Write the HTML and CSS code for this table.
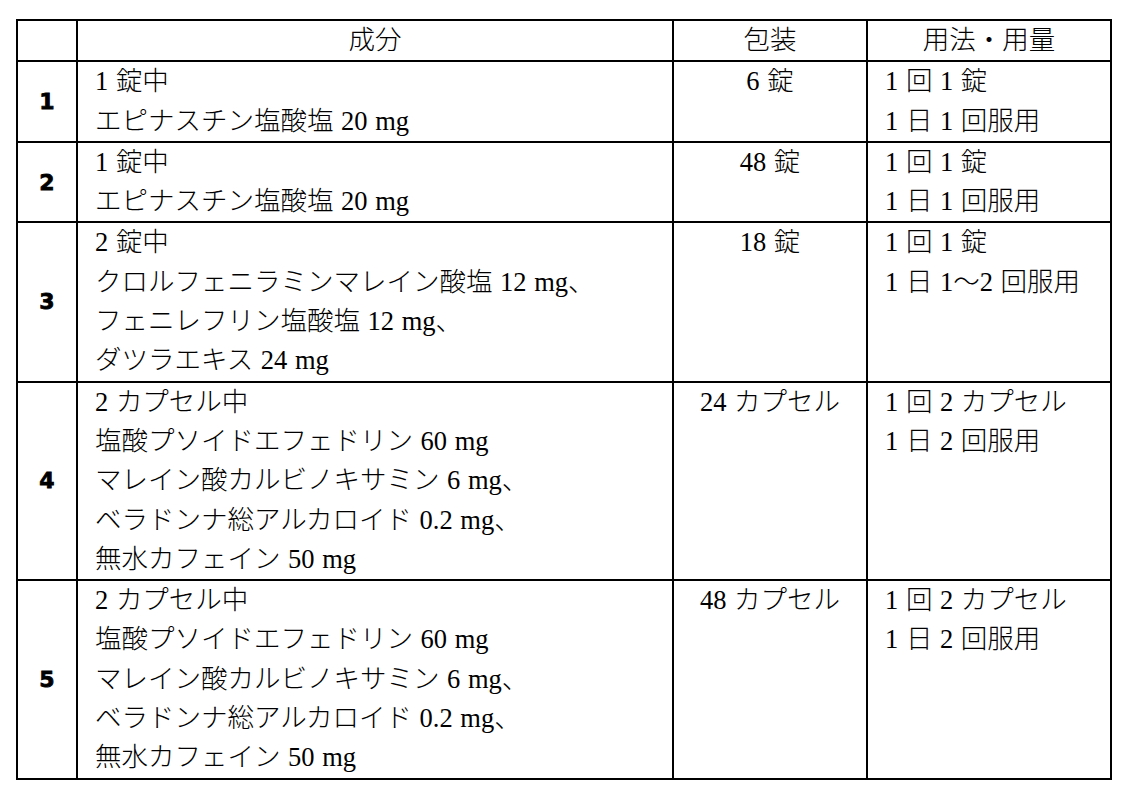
FILE: index.html
```html
<!DOCTYPE html>
<html lang="ja">
<head>
<meta charset="utf-8">
<title>成分・包装・用法</title>
<link rel="stylesheet" href="styles.css">
</head>
<body>
<table class="drug-table">
  <colgroup>
    <col class="c-num">
    <col class="c-ing">
    <col class="c-pack">
    <col class="c-use">
  </colgroup>
  <thead>
    <tr>
      <th class="num"></th>
      <th>成分</th>
      <th>包装</th>
      <th>用法・用量</th>
    </tr>
  </thead>
  <tbody>
    <tr>
      <td class="num">1</td>
      <td>1 錠中<br>エピナスチン塩酸塩 20 mg</td>
      <td class="pack">6 錠</td>
      <td>1 回 1 錠<br>1 日 1 回服用</td>
    </tr>
    <tr>
      <td class="num">2</td>
      <td>1 錠中<br>エピナスチン塩酸塩 20 mg</td>
      <td class="pack">48 錠</td>
      <td>1 回 1 錠<br>1 日 1 回服用</td>
    </tr>
    <tr>
      <td class="num">3</td>
      <td>2 錠中<br>クロルフェニラミンマレイン酸塩 12 mg、<br>フェニレフリン塩酸塩 12 mg、<br>ダツラエキス 24 mg</td>
      <td class="pack">18 錠</td>
      <td>1 回 1 錠<br>1 日 1〜2 回服用</td>
    </tr>
    <tr>
      <td class="num">4</td>
      <td>2 カプセル中<br>塩酸プソイドエフェドリン 60 mg<br>マレイン酸カルビノキサミン 6 mg、<br>ベラドンナ総アルカロイド 0.2 mg、<br>無水カフェイン 50 mg</td>
      <td class="pack">24 カプセル</td>
      <td>1 回 2 カプセル<br>1 日 2 回服用</td>
    </tr>
    <tr>
      <td class="num">5</td>
      <td>2 カプセル中<br>塩酸プソイドエフェドリン 60 mg<br>マレイン酸カルビノキサミン 6 mg、<br>ベラドンナ総アルカロイド 0.2 mg、<br>無水カフェイン 50 mg</td>
      <td class="pack">48 カプセル</td>
      <td>1 回 2 カプセル<br>1 日 2 回服用</td>
    </tr>
  </tbody>
</table>
</body>
</html>
```

FILE: styles.css
```css
html, body {
  margin: 0;
  padding: 0;
  background: #fff;
}

body {
  padding: 19px 0 0 16px;
  color: #000;
  font-family: "Liberation Serif", "Noto Sans CJK JP", serif;
  font-size: 26.5px;
}

.drug-table {
  border-collapse: collapse;
  table-layout: fixed;
  width: 1096px;
  border: 2px solid #000;
}

.c-num { width: 60px; }
.c-ing { width: 596px; }
.c-pack { width: 194px; }
.c-use { width: 244px; }

.drug-table th,
.drug-table td {
  border: 2px solid #000;
  padding: 0 0 0 17px;
  line-height: 39.3px;
  vertical-align: top;
  text-align: left;
  font-weight: 300;
  word-spacing: 1px;
  white-space: nowrap;
}

.drug-table th {
  text-align: center;
  padding: 0;
}

.drug-table td.pack {
  text-align: center;
  padding: 0;
}

.drug-table td.num {
  padding: 0;
  text-align: center;
  vertical-align: middle;
  font-family: "DejaVu Sans", "Liberation Sans", sans-serif;
  font-weight: 700;
  font-size: 22px;
  -webkit-text-stroke: 0.8px #000;
}
```
